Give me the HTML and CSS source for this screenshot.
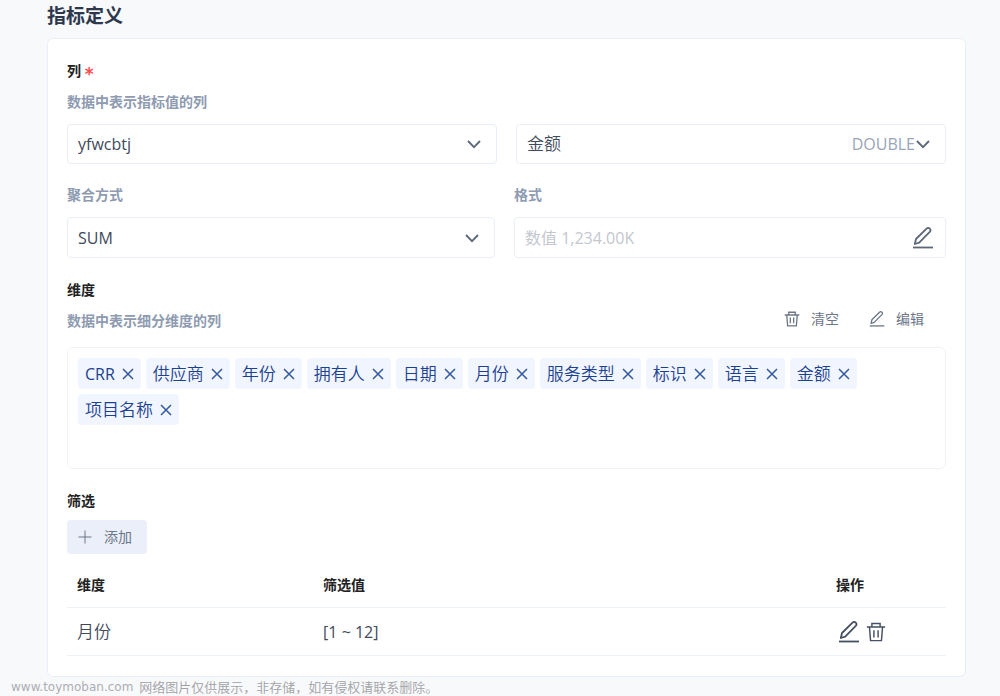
FILE: index.html
```html
<!DOCTYPE html>
<html lang="zh-CN">
<head>
<meta charset="utf-8">
<title>指标定义</title>
<link rel="stylesheet" href="styles.css">
</head>
<body>
<svg class="sprite" aria-hidden="true">
  <symbol id="chevron" viewBox="0 0 16 16"><path d="M2 5l6 6.200l6-6.200"/></symbol>
  <symbol id="close" viewBox="0 0 12 12"><path d="M1 1l10 10M11 1L1 11"/></symbol>
  <symbol id="plus" viewBox="0 0 14 14"><path d="M7 0.500v13M0.500 7h13"/></symbol>
  <symbol id="pen" viewBox="0 0 22 22"><path d="M1 20.500h20"/><path stroke-linejoin="round" d="M2.800 17l1.200-5L14.800 1.400q1.500-1.100 2.900.3t.3 2.900L7.200 15.600z"/></symbol>
  <symbol id="trash" viewBox="0 0 22 22"><path d="M1 5.500h20M6.500 5.500V1.700h9v3.800M3.800 5.500l1.200 15h12l1.200-15M8.700 9v8M13.300 9v8"/></symbol>
</svg>
<main class="page">
  <h1 class="page-title">指标定义</h1>
  <form class="card">
    <h2 class="label">列 <span class="required">*</span></h2>
    <p class="hint">数据中表示指标值的列</p>
    <div class="columns columns-even">
      <div class="field">
        <select class="control latin" aria-label="数据表"><option>yfwcbtj</option></select>
        <span class="suffix"><svg class="icon-chevron"><use href="#chevron"/></svg></span>
      </div>
      <div class="field">
        <select class="control" aria-label="列"><option>金额</option></select>
        <span class="suffix">DOUBLE<svg class="icon-chevron"><use href="#chevron"/></svg></span>
      </div>
    </div>
    <div class="columns columns-format">
      <div>
        <label class="hint hint-field" for="agg">聚合方式</label>
        <div class="field">
          <select class="control latin" id="agg"><option>SUM</option></select>
          <span class="suffix"><svg class="icon-chevron"><use href="#chevron"/></svg></span>
        </div>
      </div>
      <div>
        <label class="hint hint-field" for="format">格式</label>
        <div class="field">
          <input class="control latin" id="format" type="text" placeholder="数值 1,234.00K">
          <button class="suffix suffix-button" type="button" aria-label="编辑格式"><svg class="icon-large"><use href="#pen"/></svg></button>
        </div>
      </div>
    </div>
    <section class="section">
      <h2 class="label">维度</h2>
      <div class="toolbar">
        <p class="hint hint-toolbar">数据中表示细分维度的列</p>
        <button class="text-button" type="button"><svg class="icon-small"><use href="#trash"/></svg>清空</button>
        <button class="text-button" type="button"><svg class="icon-small"><use href="#pen"/></svg>编辑</button>
      </div>
      <ul class="chips">
        <li class="chip latin">CRR<button class="chip-close" type="button" aria-label="移除 CRR"><svg class="icon-close"><use href="#close"/></svg></button></li>
        <li class="chip">供应商<button class="chip-close" type="button" aria-label="移除供应商"><svg class="icon-close"><use href="#close"/></svg></button></li>
        <li class="chip">年份<button class="chip-close" type="button" aria-label="移除年份"><svg class="icon-close"><use href="#close"/></svg></button></li>
        <li class="chip">拥有人<button class="chip-close" type="button" aria-label="移除拥有人"><svg class="icon-close"><use href="#close"/></svg></button></li>
        <li class="chip">日期<button class="chip-close" type="button" aria-label="移除日期"><svg class="icon-close"><use href="#close"/></svg></button></li>
        <li class="chip">月份<button class="chip-close" type="button" aria-label="移除月份"><svg class="icon-close"><use href="#close"/></svg></button></li>
        <li class="chip">服务类型<button class="chip-close" type="button" aria-label="移除服务类型"><svg class="icon-close"><use href="#close"/></svg></button></li>
        <li class="chip">标识<button class="chip-close" type="button" aria-label="移除标识"><svg class="icon-close"><use href="#close"/></svg></button></li>
        <li class="chip">语言<button class="chip-close" type="button" aria-label="移除语言"><svg class="icon-close"><use href="#close"/></svg></button></li>
        <li class="chip">金额<button class="chip-close" type="button" aria-label="移除金额"><svg class="icon-close"><use href="#close"/></svg></button></li>
        <li class="chip">项目名称<button class="chip-close" type="button" aria-label="移除项目名称"><svg class="icon-close"><use href="#close"/></svg></button></li>
      </ul>
    </section>
    <section class="section">
      <h2 class="label">筛选</h2>
      <button class="add-button" type="button"><svg class="icon-plus"><use href="#plus"/></svg>添加</button>
      <table class="filters">
        <thead><tr><th class="col-name">维度</th><th>筛选值</th><th class="col-actions">操作</th></tr></thead>
        <tbody><tr>
          <td>月份</td>
          <td class="latin">[1 ~ 12]</td>
          <td><div class="actions">
            <button class="icon-button" type="button" aria-label="编辑"><svg class="icon-large"><use href="#pen"/></svg></button>
            <button class="icon-button" type="button" aria-label="删除"><svg class="icon-medium"><use href="#trash"/></svg></button>
          </div></td>
        </tr></tbody>
      </table>
    </section>
  </form>
  <footer class="notice"><span class="notice-site">www.toymoban.com</span> <span>网络图片仅供展示，非存储，如有侵权请联系删除。</span></footer>
</main>
</body>
</html>
```

FILE: styles.css
```css
* { box-sizing: border-box; }
body {
  margin: 0;
  background: #f8f9fb;
  color: #3f4a5c;
  font: 350 17px/24px "Open Sans", "Noto Sans CJK SC", sans-serif;
}
h1, h2, p, ul { margin: 0; padding: 0; }
button, select, input { font: inherit; color: inherit; margin: 0; }
button { border: 0; background: none; padding: 0; cursor: pointer; }
svg { fill: none; stroke: currentColor; display: block; flex: none; }
.sprite { display: none; }
.page { padding: 0 34px 0 47px; }
.page-title {
  padding: 1px 0 7px;
  font-size: 19px;
  line-height: 30px;
  font-weight: 700;
  color: #2d384d;
}
.card {
  padding: 20px 19px;
  background: #fff;
  border: 1px solid #e9eef8;
  border-radius: 6px;
}
.label { font-size: 14px; line-height: 24px; font-weight: 700; color: #222; }
.required { color: #ff4d4f; font-family: "DejaVu Sans", sans-serif; font-size: 17px; line-height: 16px; vertical-align: -4px; }
.hint {
  margin: 8px 0 11px;
  font-size: 14px;
  line-height: 22px;
  font-weight: 700;
  color: #8e9bb0;
}
.hint-field { display: block; margin-top: 0; }
.columns { display: grid; column-gap: 19px; }
.columns-even { grid-template-columns: 1fr 1fr; }
.columns-format { grid-template-columns: 428fr 432fr; margin-top: 20px; }
.columns-format .control { height: 41px; }
.field { position: relative; }
.control {
  display: block;
  width: 100%;
  height: 40px;
  padding: 0 10px;
  border: 1px solid #e9eef8;
  border-radius: 4px;
  background: #fff;
  appearance: none;
  outline: 0;
}
.latin { font-size: 16px; font-weight: 400; }
.control::placeholder { color: #c3c7ce; opacity: 1; }
.suffix {
  position: absolute;
  top: 0;
  right: 15px;
  bottom: 0;
  display: flex;
  align-items: center;
  font-size: 16px;
  font-weight: 400;
  color: #98a5b8;
  pointer-events: none;
}
.suffix-button { right: 12px; color: #5c6779; pointer-events: auto; }
.icon-chevron { width: 16px; height: 16px; stroke-width: 1.8; color: #5c6779; }
.icon-close { width: 12px; height: 12px; stroke-width: 1.5; color: #34589f; }
.icon-plus { width: 14px; height: 14px; stroke-width: 1; }
.icon-small { width: 16px; height: 16px; stroke-width: 1.8; }
.icon-medium { width: 20px; height: 20px; stroke-width: 1.6; }
.icon-large { width: 22px; height: 22px; stroke-width: 1.8; }
.section { margin-top: 20px; }
.toolbar { display: flex; align-items: center; height: 34px; margin-bottom: 11px; }
.hint-toolbar { margin: 3px auto 0 0; }
.text-button {
  display: flex;
  align-items: center;
  gap: 11px;
  margin-right: 22px;
  padding-left: 8px;
  font-size: 14px;
  font-weight: 400;
  color: #6c7688;
}
.chips {
  display: flex;
  flex-wrap: wrap;
  align-content: flex-start;
  gap: 5px;
  min-height: 122px;
  padding: 10px;
  border: 1px solid #eef2f9;
  border-radius: 6px;
  list-style: none;
}
.chip {
  display: flex;
  align-items: center;
  gap: 7px;
  height: 31px;
  padding: 0 7px;
  border-radius: 4px;
  background: #f0f5ff;
  color: #1c418f;
}
.add-button {
  display: flex;
  align-items: center;
  gap: 12px;
  height: 34px;
  margin-top: 7px;
  padding: 0 15px 0 11px;
  border-radius: 4px;
  background: #eaeff9;
  font-size: 14px;
  font-weight: 400;
  color: #6c7688;
}
.filters { width: 100%; margin-top: 8px; border-collapse: collapse; table-layout: fixed; }
.filters th, .filters td { padding: 2px 10px 0; border-bottom: 1px solid #eef2f9; text-align: left; }
.filters th { height: 45px; font-size: 14px; font-weight: 700; color: #222; }
.filters td { height: 48px; }
.col-name { width: 28%; }
.col-actions { width: 120px; }
.actions { display: flex; align-items: center; gap: 6px; padding-left: 2px; }
.icon-button { color: #465064; }
.notice {
  display: flex;
  gap: 6px;
  margin-left: -36px;
  font-size: 13px;
  line-height: 20px;
  font-weight: 350;
  color: #a0a2a6;
}
.notice-site { font-family: "DejaVu Sans", sans-serif; font-size: 12px; font-weight: 400; color: #acaeb2; }
```
